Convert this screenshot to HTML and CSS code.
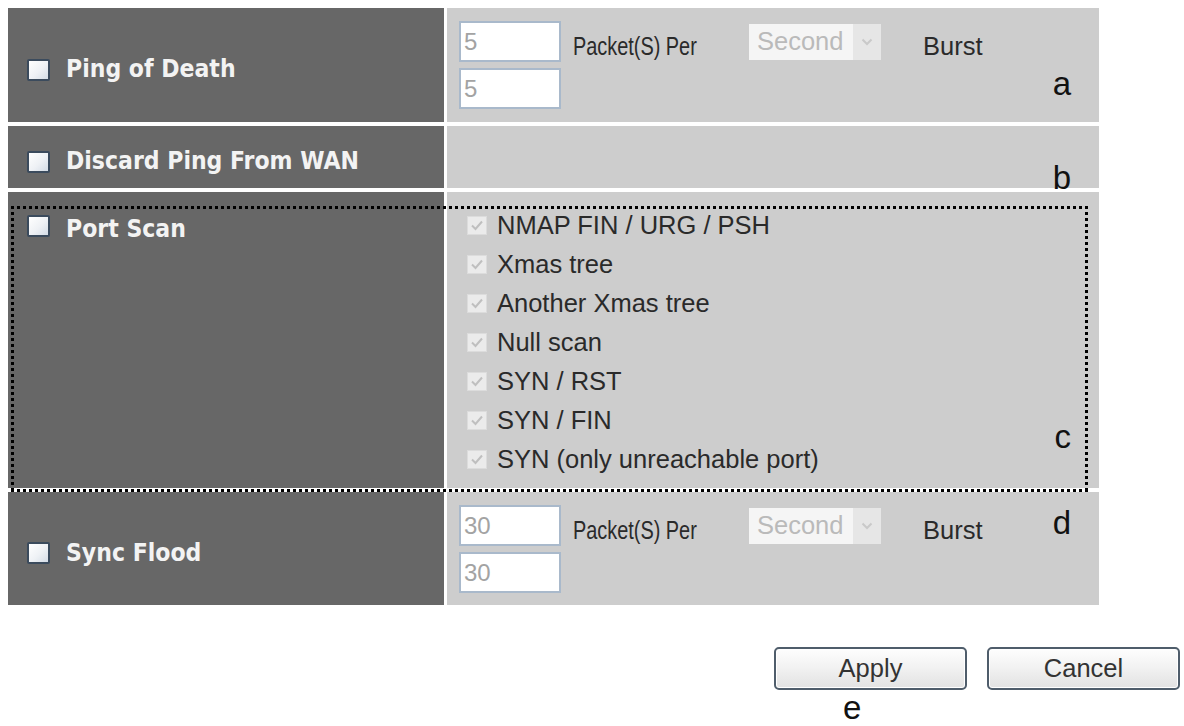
FILE: index.html
```html
<!DOCTYPE html>
<html lang="en">
  <head>
    <meta charset="UTF-8" />
    <meta name="viewport" content="width=device-width, initial-scale=1.0" />
    <title>DoS Protection</title>
    <link rel="stylesheet" href="styles.css">
  </head>
  <body>
    <div class="page">
      <div class="filter-table">
        <!-- Ping of Death -->
        <div class="label-cell"><span class="box"></span>Ping of Death</div>
        <div class="value-cell">
          <div class="rate">
            <input class="num" type="text" value="5" />
            <span class="unit">Packet(S) Per</span>
            <div class="select">
              <span class="select-text">Second</span>
              <span class="select-arrow">
                <svg width="12" height="8" viewBox="0 0 12 8"><path d="M1.5 1.5 L6 6 L10.5 1.5" fill="none" stroke="#c9c9c9" stroke-width="2"/></svg>
              </span>
            </div>
            <span class="unit burst">Burst</span>
            <input class="num" type="text" value="5" />
          </div>
          <span class="tag tag-a">a</span>
        </div>

        <!-- Discard Ping From WAN -->
        <div class="label-cell"><span class="box"></span>Discard Ping From WAN</div>
        <div class="value-cell">
          <span class="tag tag-b">b</span>
        </div>

        <!-- Port Scan -->
        <div class="label-cell label-top"><span class="box"></span>Port Scan</div>
        <div class="value-cell">
          <ul class="scan-list">
            <li><span class="tick"><svg width="20" height="19" viewBox="0 0 20 19"><rect x="0.5" y="0.5" width="19" height="18" fill="#ebebeb" stroke="#dcdcdc"/><path d="M5 9.5 L8.5 13 L15 5.5" fill="none" stroke="#bfbfbf" stroke-width="2"/></svg></span>NMAP FIN / URG / PSH</li>
            <li><span class="tick"><svg width="20" height="19" viewBox="0 0 20 19"><rect x="0.5" y="0.5" width="19" height="18" fill="#ebebeb" stroke="#dcdcdc"/><path d="M5 9.5 L8.5 13 L15 5.5" fill="none" stroke="#bfbfbf" stroke-width="2"/></svg></span>Xmas tree</li>
            <li><span class="tick"><svg width="20" height="19" viewBox="0 0 20 19"><rect x="0.5" y="0.5" width="19" height="18" fill="#ebebeb" stroke="#dcdcdc"/><path d="M5 9.5 L8.5 13 L15 5.5" fill="none" stroke="#bfbfbf" stroke-width="2"/></svg></span>Another Xmas tree</li>
            <li><span class="tick"><svg width="20" height="19" viewBox="0 0 20 19"><rect x="0.5" y="0.5" width="19" height="18" fill="#ebebeb" stroke="#dcdcdc"/><path d="M5 9.5 L8.5 13 L15 5.5" fill="none" stroke="#bfbfbf" stroke-width="2"/></svg></span>Null scan</li>
            <li><span class="tick"><svg width="20" height="19" viewBox="0 0 20 19"><rect x="0.5" y="0.5" width="19" height="18" fill="#ebebeb" stroke="#dcdcdc"/><path d="M5 9.5 L8.5 13 L15 5.5" fill="none" stroke="#bfbfbf" stroke-width="2"/></svg></span>SYN / RST</li>
            <li><span class="tick"><svg width="20" height="19" viewBox="0 0 20 19"><rect x="0.5" y="0.5" width="19" height="18" fill="#ebebeb" stroke="#dcdcdc"/><path d="M5 9.5 L8.5 13 L15 5.5" fill="none" stroke="#bfbfbf" stroke-width="2"/></svg></span>SYN / FIN</li>
            <li><span class="tick"><svg width="20" height="19" viewBox="0 0 20 19"><rect x="0.5" y="0.5" width="19" height="18" fill="#ebebeb" stroke="#dcdcdc"/><path d="M5 9.5 L8.5 13 L15 5.5" fill="none" stroke="#bfbfbf" stroke-width="2"/></svg></span>SYN (only unreachable port)</li>
          </ul>
          <span class="tag tag-c">c</span>
        </div>

        <!-- Sync Flood -->
        <div class="label-cell"><span class="box"></span>Sync Flood</div>
        <div class="value-cell">
          <div class="rate">
            <input class="num" type="text" value="30" />
            <span class="unit">Packet(S) Per</span>
            <div class="select">
              <span class="select-text">Second</span>
              <span class="select-arrow">
                <svg width="12" height="8" viewBox="0 0 12 8"><path d="M1.5 1.5 L6 6 L10.5 1.5" fill="none" stroke="#c9c9c9" stroke-width="2"/></svg>
              </span>
            </div>
            <span class="unit burst">Burst</span>
            <input class="num" type="text" value="30" />
          </div>
          <span class="tag tag-d">d</span>
        </div>

        <!-- highlight around the port scan group -->
        <div class="scan-frame"></div>
      </div>

      <div class="actions">
        <div class="apply-col">
          <button class="btn" type="button">Apply</button>
          <span class="note">e</span>
        </div>
        <button class="btn" type="button">Cancel</button>
      </div>
    </div>
  </body>
</html>
```

FILE: styles.css
```css
body {
  margin: 0;
  background: #fff;
  font-family: "Liberation Sans", Arial, sans-serif;
  color: #222;
}

.page {
  padding: 8px 0 0 8px;
}

.filter-table {
  position: relative;
  display: grid;
  grid-template-columns: 436px 652px;
  grid-template-rows: 114px 62px 296px 113px;
  column-gap: 3px;
  row-gap: 4px;
  width: 1091px;
}

.label-cell {
  display: flex;
  align-items: center;
  gap: 16px;
  padding: 8px 0 0 19px;
  background: #676767;
  color: #f3f3f3;
  font-family: "DejaVu Sans Condensed", "DejaVu Sans", sans-serif;
  font-stretch: condensed;
  font-weight: bold;
  font-size: 24.5px;
  line-height: 30px;
}

.label-top {
  align-items: flex-start;
  padding-top: 22px;
}

.box {
  flex: none;
  width: 19px;
  height: 18px;
  margin-top: 1px;
  border: 2px solid #3b4b5d;
  border-radius: 2px;
  background: linear-gradient(135deg, #ffffff 0%, #eef1f5 55%, #d4dce6 100%);
}

.value-cell {
  position: relative;
  background: #cdcdcd;
  font-size: 25.5px;
  color: #2a2a2a;
}

/* rate limit: two inputs stacked, unit text and period on the first line */
.rate {
  display: grid;
  grid-template-columns: 102px 164px 132px auto;
  grid-template-rows: 41px 41px;
  column-gap: 12px;
  row-gap: 6px;
  padding: 13px 0 0 12px;
  align-items: center;
}

.num {
  box-sizing: border-box;
  width: 102px;
  height: 41px;
  margin: 0;
  padding: 0 3px;
  border: 2px solid #a9b9cb;
  background: #fff;
  color: #a3a3a3;
  font-family: "Liberation Sans", Arial, sans-serif;
  font-size: 24px;
  outline: none;
}

.unit {
  align-self: start;
  line-height: 51px;
  white-space: nowrap;
}

/* the unit caption is set narrow on this page */
.unit:first-of-type {
  justify-self: start;
  transform: scaleX(0.78);
  transform-origin: left center;
}

.burst {
  margin-left: 30px;
}

.select {
  display: flex;
  height: 36px;
  background: #f5f5f5;
  color: #bababa;
}

.select-text {
  flex: 1;
  padding-left: 8px;
  line-height: 34px;
}

.select-arrow {
  display: flex;
  align-items: center;
  justify-content: center;
  width: 28px;
  background: #e6e6e6;
}

.scan-list {
  list-style: none;
  margin: 0;
  padding: 14px 0 0 20px;
}

.scan-list li {
  display: flex;
  align-items: center;
  gap: 10px;
  height: 39px;
  line-height: 39px;
  white-space: nowrap;
}

.tick {
  display: flex;
  flex: none;
}

.tag {
  position: absolute;
  right: 28px;
  font-size: 33px;
  line-height: 1;
  color: #111;
}

.tag-a { top: 59px; }
.tag-b { top: 35px; }
.tag-c { top: 228px; }
.tag-d { top: 14px; }

.scan-frame {
  position: absolute;
  left: 3px;
  top: 198px;
  width: 1077px;
  height: 286px;
  pointer-events: none;
  background:
    repeating-linear-gradient(to right, #000 0 3px, transparent 3px 6px) top left / 100% 3px no-repeat,
    repeating-linear-gradient(to right, #000 0 3px, transparent 3px 6px) bottom left / 100% 3px no-repeat,
    repeating-linear-gradient(to bottom, #000 0 3px, transparent 3px 6px) top left / 3px 100% no-repeat,
    repeating-linear-gradient(to bottom, #000 0 3px, transparent 3px 6px) top right / 3px 100% no-repeat;
}

.actions {
  display: flex;
  justify-content: flex-end;
  align-items: flex-start;
  gap: 20px;
  margin-top: 42px;
  padding-right: 4px;
}

.apply-col {
  display: flex;
  flex-direction: column;
}

.btn {
  width: 193px;
  height: 43px;
  border: 2px solid #4f5d6b;
  border-radius: 5px;
  background: linear-gradient(#fefefe, #f1f1f1 50%, #e2e2e2);
  box-shadow: inset 0 0 0 1px #fff;
  color: #333;
  font-family: "Liberation Sans", Arial, sans-serif;
  font-size: 25.5px;
  padding: 0;
}

.note {
  padding-left: 69px;
  font-size: 33px;
  line-height: 36px;
  color: #111;
}
```
